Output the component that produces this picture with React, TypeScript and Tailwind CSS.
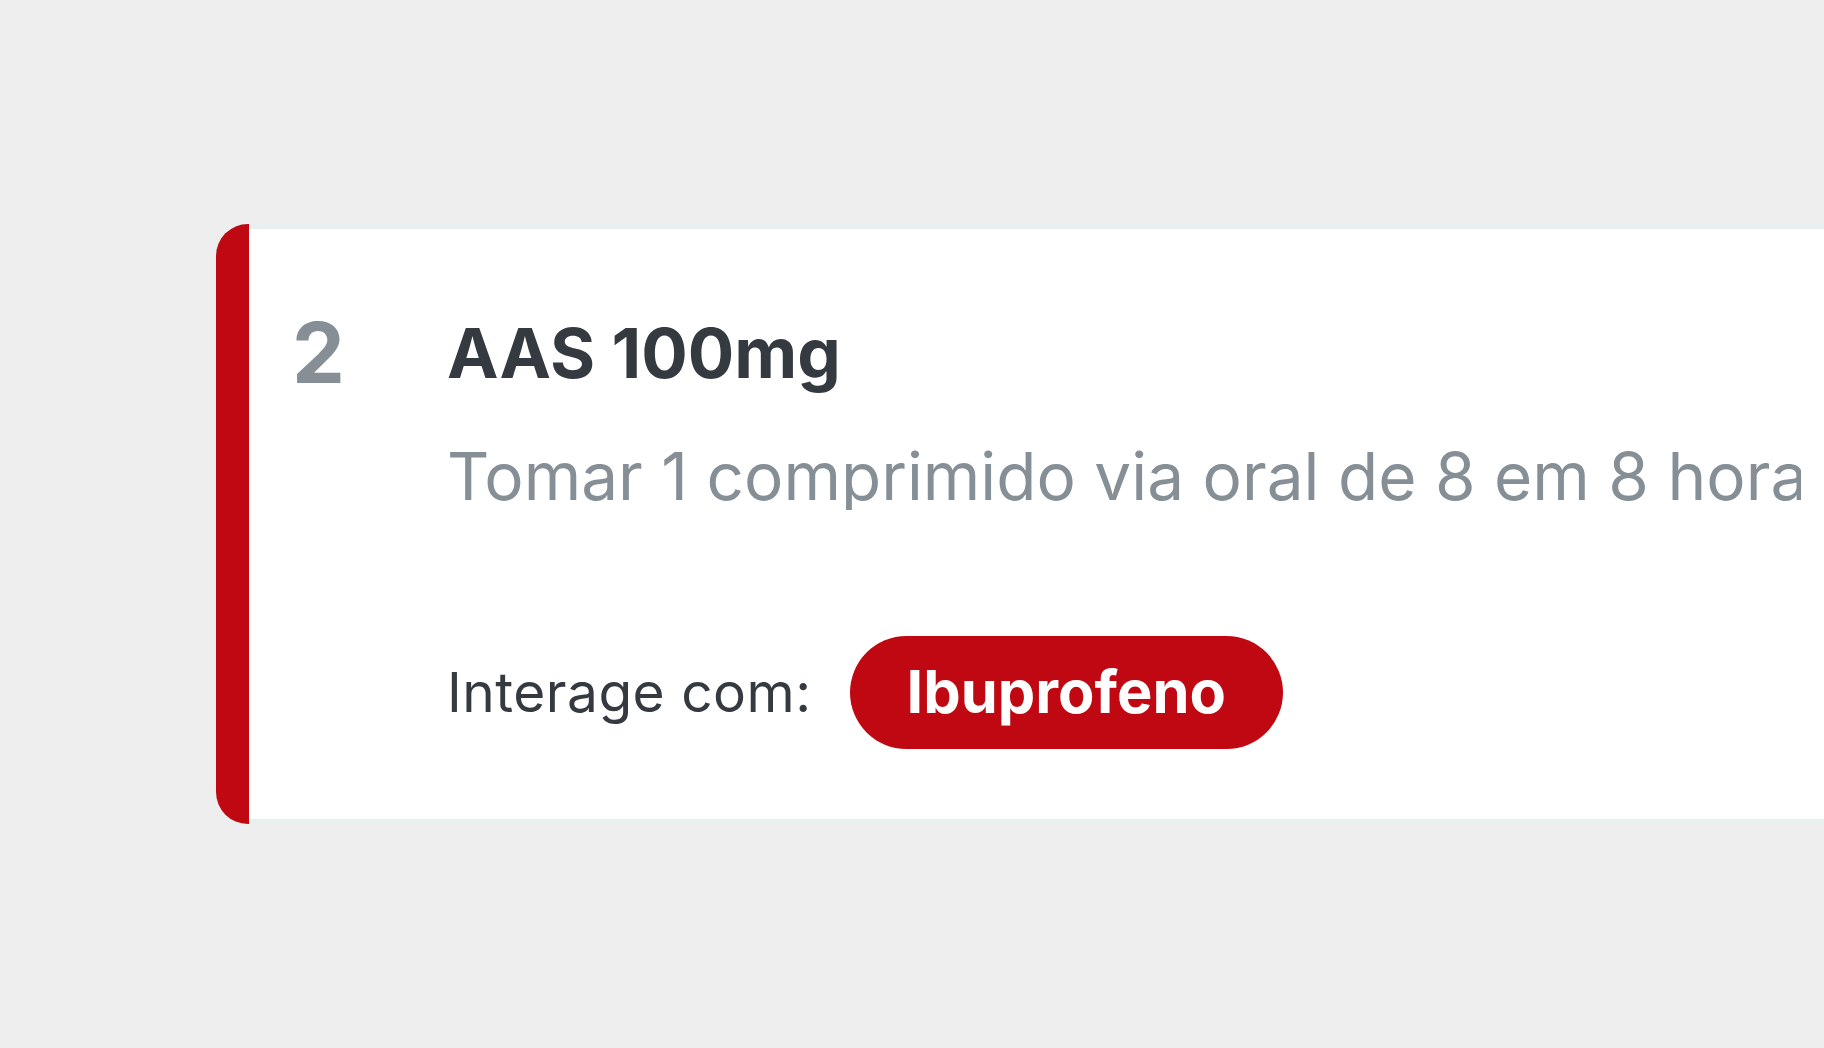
function App() {
  return (
    <div className="h-[1048px] w-[1824px] overflow-hidden bg-[#eeeeee] pl-[216px] pt-[224px] font-['Inter',sans-serif]">
      <div className="flex w-[1700px]">
        <div className="w-[33px] shrink-0 rounded-l-[32px] bg-[#bf0811]" />
        <div className="flex h-[600px] flex-1 border-y-[5px] border-[#e9eef1] bg-white">
          <div className="w-[198px] shrink-0 pl-[43px] pt-[82px]">
            <span className="block text-[84px] font-bold leading-none text-[#868e96]">2</span>
          </div>
          <div className="min-w-0 flex-1 pt-[90px]">
            <h2 className="text-[69px] font-bold leading-none text-[#343a40]">AAS 100mg</h2>
            <p className="mt-[56px] w-[1354px] overflow-hidden whitespace-nowrap text-[65.7px] leading-none text-[#868e96]">
              Tomar 1 comprimido via oral de 8 em 8 horas
            </p>
            <div className="mt-[126px] flex items-center">
              <span className="text-[55px] leading-none tracking-[0.5px] text-[#343a40]">Interage com:</span>
              <span className="ml-[38px] flex h-[113px] items-center rounded-full bg-[#bf0811] px-[57px] text-[59.5px] font-bold leading-none text-white">
                Ibuprofeno
              </span>
            </div>
          </div>
        </div>
      </div>
    </div>
  );
}

export default App;
